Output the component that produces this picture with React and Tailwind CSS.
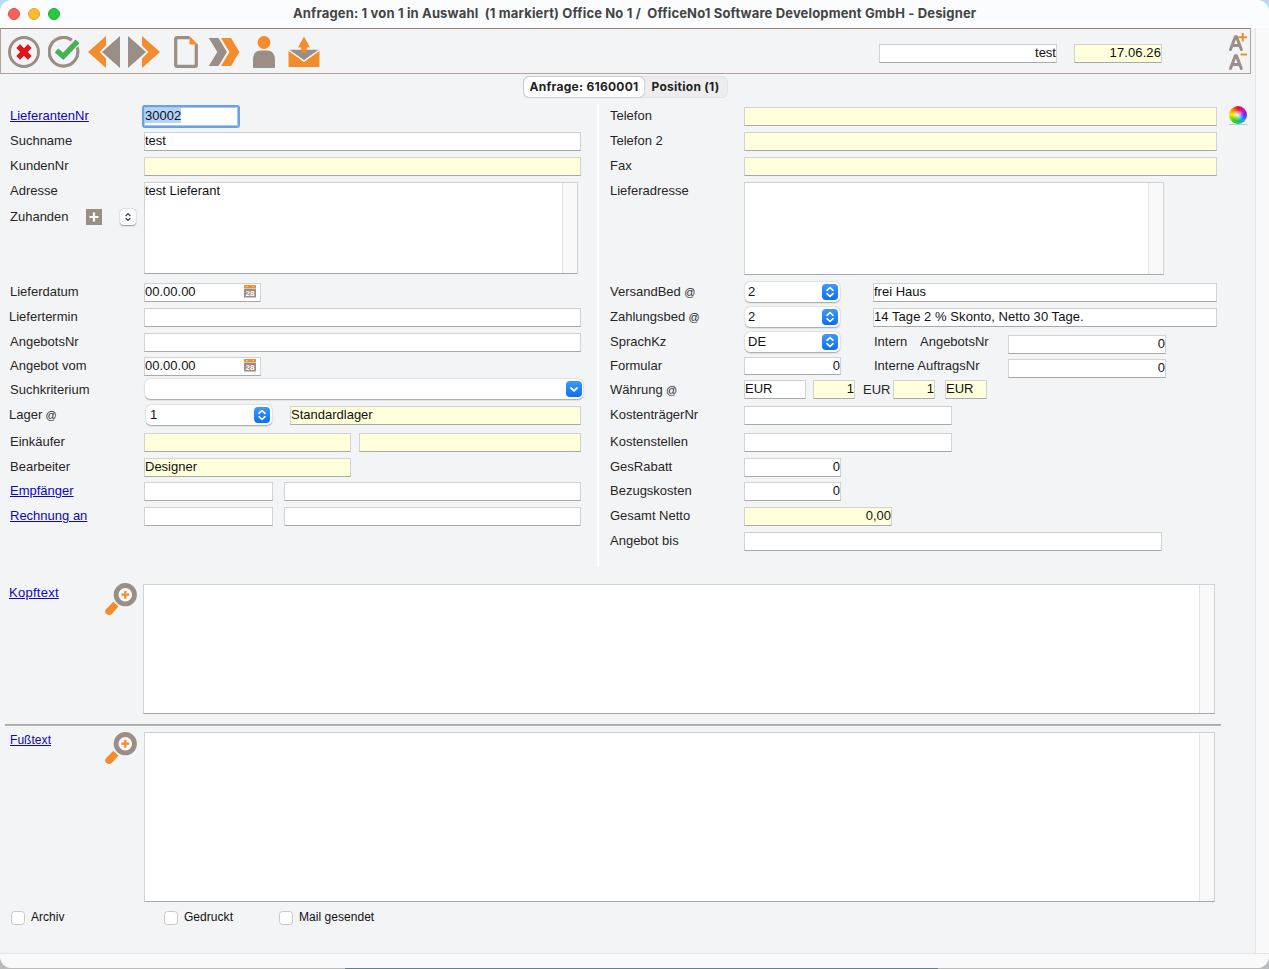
import React from "react";

const GREY = "#9b8e86";
const ORANGE = "#f28c2c";

function Row({ h = "h-[25px]", label, at, link, indent = "pl-[10px]", labelWidth = "w-[144px]", children }) {
  return (
    <div className={`flex items-start ${h}`}>
      <div className={`shrink-0 ${labelWidth} ${indent} leading-[18px] whitespace-pre ${link ? "text-[#0d05c2] underline" : "text-[#262626]"}`}>
        {label}
        {at && <span className="align-[0.5px] text-[11px] leading-none tracking-[0.3px]"> @</span>}
      </div>
      {children}
    </div>
  );
}

function Field({ w, tone = "bg-white", align = "text-left", className = "", h = "h-[19px]", children }) {
  return (
    <div
      className={`shrink-0 border border-[#d2d2d2] border-b-[#a9a9a9] leading-[16px] text-[#111] whitespace-pre ${h} ${w} ${tone} ${align} ${className}`}
    >
      {children}
    </div>
  );
}

const YELLOW = "bg-[#ffffdc]";

function TextArea({ size, children }) {
  return (
    <div className={`flex shrink-0 justify-between border border-[#d2d2d2] border-b-[#a9a9a9] bg-white leading-[16px] text-[#111] ${size}`}>
      <span>{children}</span>
      <div className="w-[15px] border-l border-[#e4e4e4] bg-[#f9f9f9]" />
    </div>
  );
}

function Select({ w, children, className = "" }) {
  return (
    <div className={`flex shrink-0 items-center justify-between rounded-[5px] bg-white pr-[2px] pl-[4px] h-[20px] shadow-[0_0.5px_1.5px_rgba(0,0,0,0.35)] text-[#111] ${w} ${className}`}>
      <span className="leading-[18px]">{children}</span>
      <span className="flex size-4 items-center justify-center rounded-[4px] bg-linear-to-b from-[#3b9bfb] to-[#0a6df5]">
        <svg width="16" height="16" viewBox="0 0 16 16" fill="none" stroke="#fff" strokeWidth="1.6" strokeLinecap="round" strokeLinejoin="round">
          <path d="M5 6.300 8 3.500l3 2.800M5 9.700l3 2.800 3-2.800" />
        </svg>
      </span>
    </div>
  );
}

function Calendar() {
  return (
    <svg className="mt-px mr-[4px]" width="12" height="13" viewBox="0 0 12 13">
      <rect width="12" height="3" rx="0.5" fill={ORANGE} />
      <path d="M2.200 1.500h1.200M8.600 1.500h1.200" stroke="#fff" strokeWidth="0.8" />
      <rect y="3.6" width="12" height="9" rx="0.5" fill={GREY} />
      <text x="6" y="11" textAnchor="middle" fontSize="8" fontWeight="700" fill="#fff" fontFamily="Liberation Sans, sans-serif">28</text>
    </svg>
  );
}

function DateField() {
  return (
    <Field w="w-[117px]" className="flex justify-between">
      <span>00.00.00</span>
      <Calendar />
    </Field>
  );
}

function Magnifier() {
  return (
    <svg className="shrink-0" width="32" height="32" viewBox="0 0 32 32">
      <circle cx="20.300" cy="11.700" r="9.200" fill="#f9fafb" stroke={GREY} strokeWidth="4.800" />
      <path d="M20.300 7.700v8M16.300 11.700h8" stroke={ORANGE} strokeWidth="2.200" />
      <path d="M8.300 18.700 13.400 23.400 7.300 30.500C5.500 32.500 2.400 32.400 .9 30.600-.5 28.900-.1 27.200 1.300 25.900Z" fill={ORANGE} />
    </svg>
  );
}

function Check({ label, className = "" }) {
  return (
    <div className={`flex shrink-0 items-center gap-[6px] text-[12px] tracking-[0.04px] text-[#111] ${className}`}>
      <span className="mt-[2px] size-[14px] rounded-[3.500px] border border-[#c9c9c9] bg-white" />
      <span className="leading-[16px]">{label}</span>
    </div>
  );
}

function Icon({ children }) {
  return (
    <svg className="shrink-0" width="32" height="32" viewBox="0 0 32 32">
      {children}
    </svg>
  );
}

function Toolbar() {
  return (
    <div className="flex h-[46px] w-[1251px] items-start border border-[#b3a19b] border-t-[#988078] pt-[7px] pl-[7px]">
      <div className="flex gap-2">
        <Icon>
          <circle cx="16" cy="16" r="14.500" fill="none" stroke={GREY} strokeWidth="3" />
          <path d="M10.200 10.200 21.800 21.800M21.800 10.200 10.200 21.800" stroke="#e3131b" strokeWidth="5.400" />
        </Icon>
        <Icon>
          <path d="M23.800 4.100A14.300 14.300 0 1 0 29 11" fill="none" stroke={GREY} strokeWidth="3.200" />
          <path d="M8.500 14.500 15.300 20.300 29.500 5.300" fill="none" stroke="#f3f4f6" strokeWidth="7.500" />
          <path d="M8.500 14.500 15.300 20.300 29.500 5.300" fill="none" stroke="#47b155" strokeWidth="5.400" />
        </Icon>
        <Icon>
          <path d="M18 0v9.500L11.500 16 18 22.500V32L0 16Z" fill={ORANGE} />
          <path d="M32 0v32L14 16Z" fill={GREY} />
        </Icon>
        <Icon>
          <path d="M14 0v9.500L20.500 16 14 22.500V32L32 16Z" fill={ORANGE} />
          <path d="M0 0v32L18 16Z" fill={GREY} />
        </Icon>
        <Icon>
          <path d="M21.500 1.700H9Q7.700 1.700 7.700 3v26Q7.700 30.300 9 30.300H27Q28.300 30.300 28.300 29V8" fill="none" stroke={GREY} strokeWidth="3.200" />
          <path d="M21.500 0 30 8.500H21.500Z" fill={ORANGE} />
        </Icon>
        <Icon>
          <path d="M.8 2h9.700l8.500 14-8.500 14H.8l8.500-14Z" fill={GREY} />
          <path d="M13 2h10l8.500 14L23 30H13l8.500-14Z" fill={ORANGE} />
        </Icon>
        <Icon>
          <circle cx="16" cy="6.500" r="6.500" fill={ORANGE} />
          <path d="M5 31V24Q5 14.500 13 14.500h6Q27 14.500 27 24v7Q27 32 26 32H6Q5 32 5 31Z" fill={GREY} />
        </Icon>
        <Icon>
          <path d="M1 13.800H31L16 24.200Z" fill={GREY} />
          <path d="M.5 14.500 16 26 31.500 14.500V31H.5Z" fill={ORANGE} />
          <path d="M.5 14 16 25 31.500 14" fill="none" stroke="#f4f5f7" strokeWidth="1.300" />
          <path d="M16 .5 22 11.500H18.800V16H13.200V11.500H10Z" fill={ORANGE} />
        </Icon>
      </div>
      <Field w="w-[178px]" align="text-right" className="mt-2 ml-[559px]">test</Field>
      <Field w="w-[88px]" tone={YELLOW} align="text-right" className="mt-2 ml-[17px] tracking-[0.1px]">17.06.26</Field>
      <svg className="-mt-[3px] ml-[66px] shrink-0" width="20" height="40" viewBox="0 0 20 40" fill="none" strokeWidth="3">
        <g stroke={GREY} strokeLinejoin="round" strokeLinecap="round">
          <path d="M2.500 16.500 7.300 3.800h1.200l4.800 12.700M4.500 12.500h6.800" />
          <path d="M2.500 35.500 7.300 22.800h1.200l4.800 12.700M4.500 31.500h6.800" />
        </g>
        <path d="M10.300 4.200H19M14.700 0v8.500M12.500 21.500H19" stroke={ORANGE} strokeWidth="2" />
      </svg>
    </div>
  );
}

function LeftForm() {
  return (
    <div className="w-[597px] pt-[3px]">
      <Row label="LieferantenNr" link labelWidth="w-[142px]">
        <div className="-mt-[2px] h-[23px] w-[98px] rounded-[3px] border-[2.500px] border-[#6a9fea] bg-white pl-[1px] leading-[17px] text-[#111] shadow-[inset_0_0_0_1px_#a6c7f3]">
          <span className="bg-[#b3d4f8]">30002</span>
        </div>
      </Row>
      <Row label="Suchname"><Field w="w-[437px]">test</Field></Row>
      <Row label="KundenNr"><Field w="w-[437px]" tone={YELLOW} /></Row>
      <div className="flex h-[101px]">
        <div className="w-[144px] shrink-0 pl-[10px] leading-[18px] text-[#262626]">
          <div>Adresse</div>
          <div className="mt-[8px] flex items-center">
            <span className="w-[76px]">Zuhanden</span>
            <svg width="16" height="16" viewBox="0 0 16 16">
              <rect width="16" height="16" rx="0.500" fill={GREY} />
              <path d="M8 3.500v9M3.500 8h9" stroke="#fff" strokeWidth="2.200" />
            </svg>
            <span className="ml-[18px] flex size-4 items-center justify-center rounded-[4px] bg-white shadow-[0_0.5px_1.5px_rgba(0,0,0,0.4)]">
              <svg className="-ml-px" width="16" height="16" viewBox="0 0 16 16" fill="none" stroke="#333" strokeWidth="1.200" strokeLinecap="round" strokeLinejoin="round">
                <path d="M6 6.500 8 4.600l2 1.900M6 9.500l2 1.900 2-1.900" />
              </svg>
            </span>
          </div>
        </div>
        <TextArea size="h-[92px] w-[434px]">test Lieferant</TextArea>
      </div>
      <Row label="Lieferdatum"><DateField /></Row>
      <Row label="Liefertermin" indent="pl-[9px]"><Field w="w-[437px]" /></Row>
      <Row label="AngebotsNr" h="h-[24px]"><Field w="w-[437px]" /></Row>
      <Row label="Angebot vom" h="h-[24px]"><DateField /></Row>
      <Row label="Suchkriterium">
        <div className="-mt-[2px] ml-px flex h-[20px] w-[438px] items-center justify-end rounded-[5px] bg-white pr-px shadow-[0_0.5px_1.5px_rgba(0,0,0,0.35)]">
          <span className="size-4 rounded-[4px] bg-linear-to-b from-[#3b9bfb] to-[#0a6df5]">
            <svg width="16" height="16" viewBox="0 0 16 16" fill="none" stroke="#fff" strokeWidth="1.800" strokeLinecap="round" strokeLinejoin="round">
              <path d="M5 7 8 9.800 11 7" />
            </svg>
          </span>
        </div>
      </Row>
      <Row label="Lager" at h="h-[27px]" indent="pl-[9px]">
        <Select w="w-[126px]" className="-mt-px ml-[2px]">1</Select>
        <Field w="w-[291px]" tone={YELLOW} className="ml-[18px]">Standardlager</Field>
      </Row>
      <Row label="Einkäufer">
        <Field w="w-[207px]" tone={YELLOW} />
        <Field w="w-[222px]" tone={YELLOW} className="ml-2" />
      </Row>
      <Row label="Bearbeiter" h="h-[24px]"><Field w="w-[207px]" tone={YELLOW}>Designer</Field></Row>
      <Row label="Empfänger" link>
        <Field w="w-[129px]" />
        <Field w="w-[297px]" className="ml-[11px]" />
      </Row>
      <Row label="Rechnung an" link>
        <Field w="w-[129px]" />
        <Field w="w-[297px]" className="ml-[11px]" />
      </Row>
    </div>
  );
}

function RightRow(props) {
  return <Row indent="pl-[11px]" labelWidth="w-[145px]" {...props} />;
}

function RightForm() {
  return (
    <div className="flex-1 pt-[3px]">
      <RightRow label="Telefon">
        <Field w="w-[473px]" tone={YELLOW} />
        <div className="-mt-px ml-[12px] h-[19px] w-[18px] border-b border-[#b9c9cf]">
          <div className="size-[18px] rounded-full bg-[radial-gradient(circle,rgba(255,255,255,0.9)_0%,rgba(255,255,255,0)_45%),conic-gradient(#e0102c,#d312c8_14%,#5a35f0_26%,#12a8ea_38%,#10c860_50%,#42d813_62%,#e5ee12_76%,#fb8d10_87%,#e0102c)]" />
        </div>
      </RightRow>
      <RightRow label="Telefon 2"><Field w="w-[473px]" tone={YELLOW} /></RightRow>
      <RightRow label="Fax"><Field w="w-[473px]" tone={YELLOW} /></RightRow>
      <RightRow label="Lieferadresse" h="h-[101px]"><TextArea size="h-[93px] w-[420px]" /></RightRow>
      <RightRow label="VersandBed" at>
        <Select w="w-[95px]" className="-mt-px ml-px !pl-[3px]">2</Select>
        <Field w="w-[344px]" className="ml-[33px]">frei Haus</Field>
      </RightRow>
      <RightRow label="Zahlungsbed" at>
        <Select w="w-[95px]" className="-mt-px ml-px !pl-[3px]">2</Select>
        <Field w="w-[344px]" className="ml-[33px] tracking-[0.06px]">14 Tage 2 % Skonto, Netto 30 Tage.</Field>
      </RightRow>
      <RightRow label="SprachKz" h="h-[24px]">
        <Select w="w-[95px]" className="-mt-px ml-px !pl-[3px]">DE</Select>
        <span className="ml-[34px] w-[46px] leading-[18px] text-[#262626]">Intern</span>
        <span className="w-[88px] leading-[18px] text-[#262626]">AngebotsNr</span>
        <Field w="w-[158px]" align="text-right" className="mt-[2px]">0</Field>
      </RightRow>
      <RightRow label="Formular" h="h-[24px]">
        <Field w="w-[97px]" h="h-[18px]" align="text-right">0</Field>
        <span className="ml-[33px] w-[134px] leading-[18px] text-[#262626]">Interne AuftragsNr</span>
        <Field w="w-[158px]" align="text-right" className="mt-[2px]">0</Field>
      </RightRow>
      <RightRow label="Währung" at>
        <Field w="w-[62px]" className="-mt-px">EUR</Field>
        <Field w="w-[42px]" tone={YELLOW} align="text-right" className="-mt-px ml-[7px]">1</Field>
        <span className="ml-2 w-[30px] leading-[18px] text-[#262626]">EUR</span>
        <Field w="w-[42px]" tone={YELLOW} align="text-right" className="-mt-px">1</Field>
        <Field w="w-[42px]" tone={YELLOW} className="-mt-px ml-[10px]">EUR</Field>
      </RightRow>
      <RightRow label="KostenträgerNr" h="h-[27px]"><Field w="w-[208px]" /></RightRow>
      <RightRow label="Kostenstellen"><Field w="w-[208px]" /></RightRow>
      <RightRow label="GesRabatt" h="h-[24px]"><Field w="w-[97px]" align="text-right">0</Field></RightRow>
      <RightRow label="Bezugskosten"><Field w="w-[97px]" align="text-right">0</Field></RightRow>
      <RightRow label="Gesamt Netto"><Field w="w-[148px]" tone={YELLOW} align="text-right">0,00</Field></RightRow>
      <RightRow label="Angebot bis"><Field w="w-[418px]" /></RightRow>
    </div>
  );
}

export default function App() {
  return (
    <div className="h-[969px] w-[1269px] overflow-hidden bg-linear-to-b from-[#b5dced] from-5% to-[#b9bcbf] to-10% pb-px font-['Liberation_Sans',Arial,sans-serif] text-[13px]">
      <div className="flex h-[968px] flex-col overflow-hidden rounded-[12px] bg-[#f3f4f6]">
        <header className="flex h-[28px] shrink-0 items-center bg-[#fafcfe]">
          <div className="flex gap-2 pl-2">
            <span className="size-3 rounded-full border border-[#e2493f] bg-[#fe5f57]" />
            <span className="size-3 rounded-full border border-[#e1a32c] bg-[#febb2e]" />
            <span className="size-3 rounded-full border border-[#1cab32] bg-[#28c840]" />
          </div>
          <h1 className="ml-[233px] font-[Inter,sans-serif] text-[13px] font-bold tracking-[0.15px] whitespace-pre text-[#444]">
            {"Anfragen: 1 von 1 in Auswahl  (1 markiert) Office No 1 /  OfficeNo1 Software Development GmbH - Designer"}
          </h1>
        </header>
        <div className="flex min-h-0 flex-1">
          <main className="w-[1255px] shrink-0">
            <Toolbar />
            <nav className="flex h-[30px] justify-center pt-[2px]">
              <div className="mr-[4px] flex h-[22px] w-[205px] items-center rounded-[6px] border border-[#e3e3e5] bg-[#ededef] font-[Inter,sans-serif] text-[12px] font-bold tracking-[0.26px] text-[#222]">
                <div className="flex h-[20px] w-[120px] items-center justify-center rounded-[5px] bg-white whitespace-nowrap shadow-[0_0_1.5px_rgba(0,0,0,0.5)]">Anfrage: 6160001</div>
                <div className="flex flex-1 justify-center whitespace-nowrap">Position (1)</div>
              </div>
            </nav>
            <div className="flex h-[463px]">
              <LeftForm />
              <div className="w-[2px] bg-white" />
              <RightForm />
            </div>
            <section className="flex h-[157px] items-start pt-4">
              <div className="w-[105px] pl-[9px] leading-[20px] tracking-[0.26px] text-[#0d05c2] underline">Kopftext</div>
              <Magnifier />
              <div className="mt-px ml-[6px]"><TextArea size="h-[130px] w-[1072px]" /></div>
            </section>
            <div className="ml-[5px] h-[2px] w-[1216px] border-t border-b border-t-[#a5a5a3] border-b-[#b9b9b5]" />
            <section className="flex h-[181px] items-start pt-[6px]">
              <div className="w-[105px] pl-[10px] text-[12px] leading-[16px] tracking-[0.05px] text-[#0d05c2] underline">Fußtext</div>
              <Magnifier />
              <div className="ml-[7px]"><TextArea size="h-[170px] w-[1071px]" /></div>
            </section>
            <div className="flex h-[20px] pl-[11px]">
              <Check label="Archiv" className="w-[153px]" />
              <Check label="Gedruckt" className="w-[115px]" />
              <Check label="Mail gesendet" />
            </div>
          </main>
          <aside className="w-[14px] border-l border-[#e3e4e6] bg-[#f9f9fa]" />
        </div>
        <footer className="h-[15px] shrink-0 border-t border-[#e3e4e6] bg-[#f9f9fa]" />
      </div>
      <div className="ml-[345px] h-px w-[593px] bg-[#5f7f93]" />
    </div>
  );
}
